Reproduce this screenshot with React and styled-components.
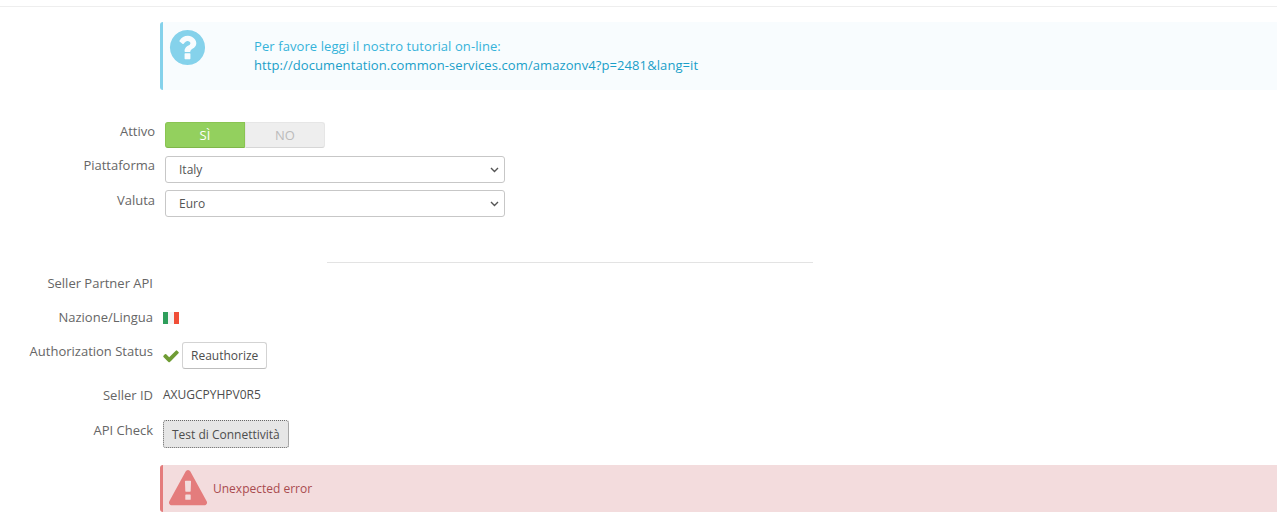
import styled, { createGlobalStyle } from "styled-components";

const GlobalStyle = createGlobalStyle`
    html, body {
        margin: 0;
        padding: 0;
        background: #fff;
        font-family: "Open Sans", "Liberation Sans", sans-serif;
        font-size: 12px;
        color: #555;
    }
`;

const Page = styled.div`
    padding-top: 6px;
`;

const TopRule = styled.hr`
    height: 1px;
    margin: 0 0 15px;
    border: 0;
    background: #eeeeee;
`;

const Alert = styled.div`
    display: flex;
    align-items: ${(p) => (p.$danger ? "center" : "flex-start")};
    box-sizing: border-box;
    height: ${(p) => (p.$danger ? "47px" : "68px")};
    margin-left: 160px;
    border-left: 3px solid ${(p) => (p.$danger ? "#e47c7c" : "#85d2eb")};
    border-radius: 3px 0 0 3px;
    background: ${(p) => (p.$danger ? "#f3dcdd" : "#f8fcfe")};
    color: ${(p) => (p.$danger ? "#a94b4f" : "#35b3da")};
`;

const InfoIcon = styled.svg`
    flex: none;
    width: 41px;
    height: 41px;
    margin: 5px 46px 0 4px;
    fill: #85d2eb;
`;

const DangerIcon = styled.svg`
    flex: none;
    width: 38px;
    height: 38px;
    margin: 0 6px 0 6px;
    fill: #e47c7c;
`;

const InfoText = styled.div`
    padding-top: 15px;
    font-size: 13px;
    line-height: 19px;
    letter-spacing: 0.09px;
`;

const InfoLink = styled.a`
    display: block;
    color: #1a9fc9;
    text-decoration: none;
`;

const ErrorText = styled.span`
    font-size: 12px;
`;

const TopForm = styled.div`
    display: flex;
    flex-direction: column;
    gap: 7px;
    margin-top: 32px;
`;

const Row = styled.div`
    display: flex;
    align-items: flex-start;
    gap: 10px;
    margin-top: ${(p) => p.$top || 0}px;
`;

const Label = styled.label`
    flex: none;
    width: ${(p) => p.$width || 153}px;
    padding-top: ${(p) => p.$pad || 0}px;
    font-size: 13px;
    line-height: 18px;
    text-align: right;
    color: #666;
`;

const Switch = styled.div`
    display: flex;
    width: 160px;
    height: 26px;
    margin-bottom: 1px;
    box-sizing: border-box;
`;

const SwitchOption = styled.div`
    display: flex;
    align-items: center;
    justify-content: center;
    width: 80px;
    font-size: 13px;
    border: 1px solid ${(p) => (p.$on ? "#8ac452" : "#e6e6e6")};
    border-bottom-color: ${(p) => (p.$on ? "#7fb64a" : "#d6d6d6")};
    border-radius: ${(p) => (p.$on ? "3px 0 0 3px" : "0 3px 3px 0")};
    background: ${(p) => (p.$on ? "#93d05e" : "#eeeeee")};
    color: ${(p) => (p.$on ? "#fff" : "#bbb")};
    box-sizing: border-box;
`;

const Select = styled.select`
    appearance: none;
    width: 340px;
    height: 27px;
    padding-left: 13px;
    border: 1px solid #c7c7c7;
    border-radius: 3px;
    background: #fff url("data:image/svg+xml,%3Csvg xmlns='http://www.w3.org/2000/svg' width='9' height='6'%3E%3Cpath d='M1 1l3.500 3.500L8 1' fill='none' stroke='%23555' stroke-width='1.400'/%3E%3C/svg%3E") no-repeat right 5px center;
    font-family: inherit;
    font-size: 12px;
    color: #555;
    box-sizing: border-box;
`;

const Divider = styled.hr`
    width: 486px;
    height: 1px;
    margin: 45px 0 0 327px;
    border: 0;
    background: #e3e3e3;
`;

const Flag = styled.div`
    display: flex;
    width: 16px;
    height: 12px;
    margin-top: 4px;
`;

const FlagBand = styled.span`
    flex: 1;
    background: ${(p) => p.$color};
`;

const StatusCell = styled.div`
    display: flex;
    align-items: center;
    gap: 2px;
`;

const CheckIcon = styled.svg`
    width: 18px;
    height: 18px;
    margin-left: -1px;
    fill: #6f9c34;
`;

const Button = styled.button`
    height: ${(p) => (p.$focus ? "28px" : "27px")};
    padding: 0 8px;
    border: 1px ${(p) => (p.$focus ? "dotted #666" : "solid #d3d3d3")};
    border-bottom-color: ${(p) => (p.$focus ? "#666" : "#bdbdbd")};
    border-radius: 3px;
    background: ${(p) => (p.$focus ? "#e6e6e6" : "#fff")};
    font-family: inherit;
    font-size: 12px;
    color: #4d4d4d;
    box-sizing: border-box;
`;

const Value = styled.span`
    font-size: 12px;
    line-height: 18px;
    color: #4d4d4d;
`;

const ErrorWrap = styled.div`
    margin-top: 17px;
`;

const QUESTION =
    "M1024 1376v-192q0-14-9-23t-23-9h-192q-14 0-23 9t-9 23v192q0 14 9 23t23 9h192q14 0 23-9t9-23zm256-672q0-88-55.500-163t-138.500-116-170-41q-243 0-371 213-15 24 8 42l132 100q7 6 19 6 16 0 25-12 53-68 86-92 34-24 86-24 48 0 85.500 26t37.500 59q0 38-20 61t-68 45q-63 28-115.500 86.500t-52.500 125.500v36q0 14 9 23t23 9h192q14 0 23-9t9-23q0-19 21.500-49.500t54.500-49.500q32-18 49-28.500t46-35 44.500-48 28-60.500 12.500-81zm384 192q0 209-103 385.500t-279.500 279.500-385.500 103-385.500-103-279.500-279.500-103-385.500 103-385.500 279.500-279.500 385.500-103 385.500 103 279.500 279.500 103 385.500z";
const WARNING =
    "M1024 1375v-190q0-14-9.500-23.500t-22.500-9.500h-192q-13 0-22.500 9.500t-9.500 23.500v190q0 14 9.500 23.500t22.500 9.500h192q13 0 22.500-9.500t9.500-23.500zm-2-374l18-459q0-12-10-19-13-11-24-11h-220q-11 0-24 11-10 7-10 21l17 457q0 10 10 16.500t24 6.500h185q14 0 23.500-6.500t10.500-16.500zm-14-934l768 1408q35 63-2 126-17 29-46.500 46t-63.500 17h-1536q-34 0-63.500-17t-46.500-46q-37-63-2-126l768-1408q17-31 47-49t65-18 65 18 47 49z";
const CHECK =
    "M1671 566q0 40-28 68l-724 724-136 136q-28 28-68 28t-68-28l-136-136-362-362q-28-28-28-68t28-68l136-136q28-28 68-28t68 28l294 295 656-657q28-28 68-28t68 28l136 136q28 28 28 68z";

export default function App() {
    return (
        <Page>
            <GlobalStyle />
            <TopRule />
            <Alert>
                <InfoIcon viewBox="0 0 1792 1792"><path d={QUESTION} /></InfoIcon>
                <InfoText>
                    Per favore leggi il nostro tutorial on-line:
                    <InfoLink href="#">http://documentation.common-services.com/amazonv4?p=2481&amp;lang=it</InfoLink>
                </InfoText>
            </Alert>

            <TopForm>
                <Row>
                    <Label $width={155}>Attivo</Label>
                    <Switch>
                        <SwitchOption $on>SÌ</SwitchOption>
                        <SwitchOption>NO</SwitchOption>
                    </Switch>
                </Row>
                <Row>
                    <Label $width={155}>Piattaforma</Label>
                    <Select defaultValue="Italy">
                        <option>Italy</option>
                    </Select>
                </Row>
                <Row>
                    <Label $width={155} $pad={1}>Valuta</Label>
                    <Select defaultValue="Euro">
                        <option>Euro</option>
                    </Select>
                </Row>
            </TopForm>

            <Divider />

            <Row $top={11}>
                <Label>Seller Partner API</Label>
            </Row>
            <Row $top={16}>
                <Label>Nazione/Lingua</Label>
                <Flag>
                    <FlagBand $color="#2e9e5b" />
                    <FlagBand $color="#f4f4f4" />
                    <FlagBand $color="#f04e37" />
                </Flag>
            </Row>
            <Row $top={16}>
                <Label>Authorization Status</Label>
                <StatusCell>
                    <CheckIcon viewBox="0 0 1792 1792"><path d={CHECK} /></CheckIcon>
                    <Button>Reauthorize</Button>
                </StatusCell>
            </Row>
            <Row $top={17}>
                <Label>Seller ID</Label>
                <Value>AXUGCPYHPV0R5</Value>
            </Row>
            <Row $top={16}>
                <Label $pad={1}>API Check</Label>
                <Button $focus>Test di Connettività</Button>
            </Row>

            <ErrorWrap>
                <Alert $danger>
                    <DangerIcon viewBox="0 0 1792 1792"><path d={WARNING} /></DangerIcon>
                    <ErrorText>Unexpected error</ErrorText>
                </Alert>
            </ErrorWrap>
        </Page>
    );
}
